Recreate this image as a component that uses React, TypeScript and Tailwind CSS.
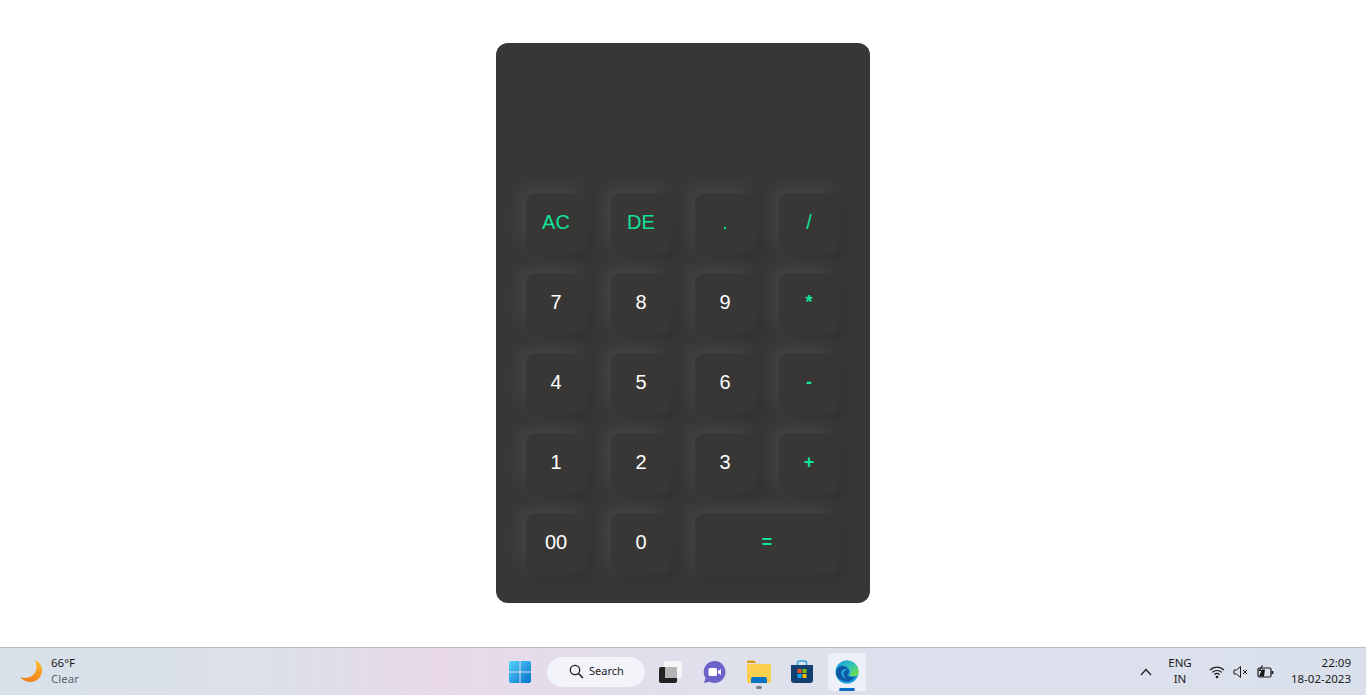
const keys: { label: string; accent?: boolean; heavy?: boolean; wide?: boolean }[] = [
  { label: "AC", accent: true },
  { label: "DE", accent: true },
  { label: ".", accent: true },
  { label: "/", accent: true },
  { label: "7" },
  { label: "8" },
  { label: "9" },
  { label: "*", accent: true, heavy: true },
  { label: "4" },
  { label: "5" },
  { label: "6" },
  { label: "-", accent: true, heavy: true },
  { label: "1" },
  { label: "2" },
  { label: "3" },
  { label: "+", accent: true, heavy: true },
  { label: "00" },
  { label: "0" },
  { label: "=", accent: true, heavy: true, wide: true },
];

function Key({ label, accent, heavy, wide }: (typeof keys)[number]) {
  return (
    <button
      type="button"
      className={`flex h-[60px] items-center justify-center rounded-[10px] bg-[#383735] pb-[2px] shadow-[-5px_-5px_20px_rgba(255,255,255,0.09),5px_5px_15px_rgba(0,0,0,0.14)] ${
        wide ? "col-span-2 w-full" : "w-[60px]"
      } ${accent ? "text-[#10e49a]" : "text-white"} ${heavy ? "text-[18px] font-bold" : "text-[20px]"}`}
    >
      {label}
    </button>
  );
}

function Weather() {
  return (
    <div className="flex items-center gap-[8px]">
      <svg width="24" height="24" viewBox="0 0 24 24" aria-hidden="true">
        <defs>
          <linearGradient id="moon" x1="0.6" y1="0" x2="0.4" y2="1">
            <stop offset="0" stopColor="#fdba2c" />
            <stop offset="1" stopColor="#f0801a" />
          </linearGradient>
        </defs>
        <path d="M16.500 0.500C23 3 25 11 21 17c-4 5.500-12 7-18 2-.8-.7-1.300-1.300-1.500-2 5.500 2 11 .5 14-3.500 2.500-3.500 2.500-8.500.5-13z" fill="url(#moon)" />
      </svg>
      <div className="pb-[2px] text-[11.500px] leading-[16px]">
        <div className="text-[#1a1a1a]">66°F</div>
        <div className="text-[#5f6470]">Clear</div>
      </div>
    </div>
  );
}

function StartIcon() {
  return (
    <svg width="24" height="24" viewBox="0 0 24 24" aria-hidden="true">
      <defs>
        <linearGradient id="win" x1="0" y1="0" x2="1" y2="1">
          <stop offset="0" stopColor="#52d2fb" />
          <stop offset="1" stopColor="#0571c9" />
        </linearGradient>
      </defs>
      <path d="M1 3a2 2 0 0 1 2-2h8.500v10.500H1zM12.500 1H21a2 2 0 0 1 2 2v8.500H12.500zM1 12.500h10.500V23H3a2 2 0 0 1-2-2zM12.500 12.500H23V21a2 2 0 0 1-2 2h-8.500z" fill="url(#win)" />
    </svg>
  );
}

function TaskViewIcon() {
  return (
    <svg width="24" height="24" viewBox="0 0 24 24" aria-hidden="true">
      <rect x="6" y="1" width="18" height="17" rx="2" fill="#f6f6f8" />
      <rect x="1" y="7" width="18" height="16" rx="2" fill="#222" />
      <rect x="7" y="7" width="12" height="11" fill="#b4b4b6" />
    </svg>
  );
}

function ChatIcon() {
  return (
    <svg width="24" height="24" viewBox="0 0 24 24" aria-hidden="true">
      <path d="M12.500 1a11 11 0 1 1-5 20.800L2 23l1.500-5A11 11 0 0 1 12.500 1z" fill="#6b62c9" />
      <rect x="6.500" y="8" width="8.500" height="8" rx="1.500" fill="#fff" />
      <path d="M16 11l3-2v6l-3-2z" fill="#fff" />
    </svg>
  );
}

function FolderIcon() {
  return (
    <svg width="26" height="24" viewBox="0 0 26 24" aria-hidden="true">
      <path d="M1 2a1.500 1.500 0 0 1 1.500-1.500H8L10.500 3H1z" fill="#d69a12" />
      <path d="M1 4h24v17.500a1.500 1.500 0 0 1-1.500 1.500h-21A1.500 1.500 0 0 1 1 21.500z" fill="#fbd04f" />
      <path d="M5 23v-4a2 2 0 0 1 2-2h12a2 2 0 0 1 2 2v4z" fill="#0a74c4" />
    </svg>
  );
}

function StoreIcon() {
  return (
    <svg width="24" height="24" viewBox="0 0 24 24" aria-hidden="true">
      <path d="M7.500 6V3a2 2 0 0 1 2-2h5a2 2 0 0 1 2 2v3" fill="none" stroke="#2aa5e0" strokeWidth="1.500" />
      <path d="M1 5h22v15a3 3 0 0 1-3 3H4a3 3 0 0 1-3-3z" fill="#123f70" />
      <rect x="7.500" y="9" width="4" height="4" fill="#f25022" />
      <rect x="12.500" y="9" width="4" height="4" fill="#7fba00" />
      <rect x="7.500" y="14" width="4" height="4" fill="#00a4ef" />
      <rect x="12.500" y="14" width="4" height="4" fill="#ffb900" />
    </svg>
  );
}

function EdgeIcon() {
  return (
    <svg width="24" height="24" viewBox="0 0 24 24" aria-hidden="true">
      <defs>
        <linearGradient id="edgeB" x1="0.2" y1="0" x2="1" y2="0.7">
          <stop offset="0" stopColor="#1fa8d8" />
          <stop offset="0.55" stopColor="#35c7b0" />
          <stop offset="1" stopColor="#6ede4e" />
        </linearGradient>
      </defs>
      <circle cx="12" cy="12" r="11.500" fill="#1b9de2" />
      <path d="M4 5C6 2 9.500.5 12 .5c6.500 0 11.500 5 11.500 11.500 0 1.800-.6 3.200-2 3.800-2 .8-6 .6-7.500-.8 2-1.500 1.800-5-1-6.800C9.500 6.500 6 5.500 4 5z" fill="url(#edgeB)" />
      <path d="M1 13c0-4 3-7 6.500-7 4 0 6.500 3 6.500 5.500 0 1-.5 2-1.300 2.500-.8.500 0 3 3.800 3 1.500 0 3-.4 4-1-2 3.500-5 5.500-8.500 5.500C6 21.500 1 17.500 1 13z" fill="#0c5aa6" />
      <path d="M6.500 13c0-2.500 2-4 4-4 1 0 2 .3 3 1-1.500-.4-3.500 0-4.500 1.500-1.200 2-.5 5.500 3 7.500-3-.5-5.500-3-5.500-6z" fill="#28b4e8" />
    </svg>
  );
}

function Tray() {
  return (
    <div className="flex items-center text-[#1a1a1a]">
      <svg width="12" height="8" viewBox="0 0 12 8" className="mr-[15px]" aria-hidden="true">
        <path d="M1 7l5-5.500L11 7" fill="none" stroke="#1a1a1a" strokeWidth="1.200" />
      </svg>
      <div className="mr-[16px] w-[26px] whitespace-nowrap pb-[2px] text-center text-[11.500px] leading-[16px]">
        <div>ENG</div>
        <div>IN</div>
      </div>
      <div className="flex items-center gap-[8px]">
        <svg width="16" height="14" viewBox="0 0 16 14" aria-hidden="true">
          <path d="M1 5a10 10 0 0 1 14 0M3.200 7.400a7 7 0 0 1 9.600 0M5.400 9.700a3.800 3.800 0 0 1 5.200 0" fill="none" stroke="#1a1a1a" strokeWidth="1.200" />
          <circle cx="8" cy="12" r="1.300" fill="#1a1a1a" />
        </svg>
        <svg width="16" height="14" viewBox="0 0 16 14" aria-hidden="true">
          <path d="M1 5h2.500L7.500 1.500v11L3.500 9H1zM10 5l4 4M14 5l-4 4" fill="none" stroke="#1a1a1a" strokeWidth="1" />
        </svg>
        <svg width="17" height="14" viewBox="0 0 17 14" aria-hidden="true">
          <rect x="1" y="3" width="13" height="9" rx="1.500" fill="none" stroke="#1a1a1a" strokeWidth="1.200" />
          <rect x="14.500" y="6" width="1.800" height="3" fill="#1a1a1a" />
          <path d="M2 11.500h5l1-7H5z" fill="#1a1a1a" />
          <path d="M5.500 0.500L2.500 5.500h3L4 9" fill="none" stroke="#1a1a1a" strokeWidth="1.200" />
        </svg>
      </div>
      <div className="ml-[16px] mr-[15px] w-[61px] whitespace-nowrap pb-[2px] text-right text-[11.500px] leading-[16px]">
        <div>22:09</div>
        <div>18-02-2023</div>
      </div>
    </div>
  );
}

export default function App() {
  return (
    <div className="flex h-[695px] flex-col bg-white font-['Liberation_Sans',sans-serif]">
      <main className="flex flex-1 items-start justify-center pt-[43px]">
        <div className="flex h-[560px] w-[374px] flex-col justify-end rounded-[12px] bg-[#383735] pb-[30px] pl-[30px]">
          <div className="grid grid-cols-[85px_84px_84px_60px] gap-y-[20px]">
            {keys.map((k) => (
              <Key key={k.label} {...k} />
            ))}
          </div>
        </div>
      </main>
      <footer className="relative flex h-[48px] items-center justify-between border-t border-[#b9bcc6] bg-[linear-gradient(90deg,#d8e1ea_0%,#dce0ea_20%,#e9d9ea_32%,#dfe0ec_50%,#d9e0ec_100%)] pl-[19px] font-['Noto_Sans',sans-serif]">
        <Weather />
        <div className="absolute left-[508px] top-0 flex h-[47px] items-center">
          <StartIcon />
          <div className="ml-[15px] flex h-[30px] w-[98px] items-center gap-[5px] rounded-full bg-[#f3f4fa] pl-[22px] text-[11px] text-[#1a1a1a]">
            <svg width="15" height="15" viewBox="0 0 15 15" aria-hidden="true">
              <circle cx="6" cy="6" r="4.700" fill="none" stroke="#1a1a1a" strokeWidth="1.300" />
              <path d="M9.500 9.500L14 14" stroke="#1a1a1a" strokeWidth="1.500" />
            </svg>
            Search
          </div>
          <div className="ml-[13px] flex w-[24px] justify-center">
            <TaskViewIcon />
          </div>
          <div className="ml-[20px]">
            <ChatIcon />
          </div>
          <div className="relative ml-[20px]">
            <FolderIcon />
            <span className="absolute -bottom-[5px] left-[10px] h-[3px] w-[6px] rounded-full bg-[#7c808a]" />
          </div>
          <div className="ml-[18px]">
            <StoreIcon />
          </div>
          <div className="relative ml-[14px] flex h-[38px] w-[38px] items-center justify-center rounded-[4px] bg-[#eef0f8]">
            <EdgeIcon />
            <span className="absolute bottom-0 left-[11px] h-[3px] w-[16px] rounded-full bg-[#0a6cc4]" />
          </div>
        </div>
        <Tray />
      </footer>
    </div>
  );
}
